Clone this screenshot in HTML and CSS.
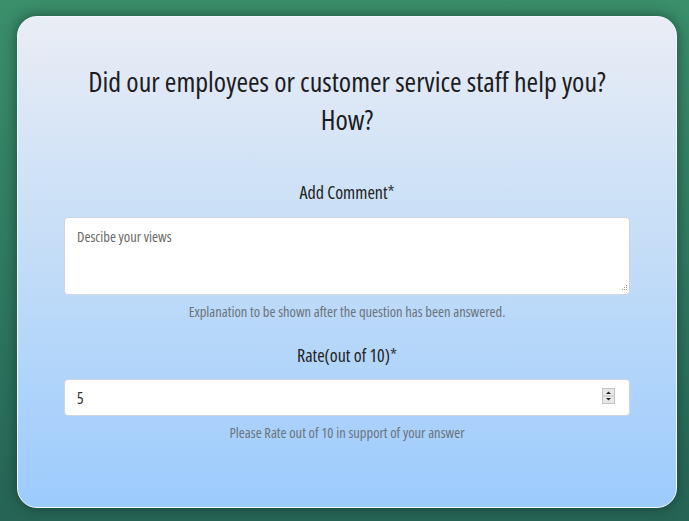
FILE: index.html
```html
<!DOCTYPE html>
<html>
<head>
<meta charset="utf-8">
<link rel="stylesheet" href="styles.css">
</head>
<body>
<main class="card">
  <h1 class="question">Did our employees or customer service staff help you?<br>How?</h1>
  <div class="field field-comment">
    <label class="label" for="comment">Add Comment<span class="req">*</span></label>
    <div class="control">
      <textarea id="comment" class="textarea" placeholder="Descibe your views"></textarea>
      <svg class="grip" width="8" height="8" viewBox="0 0 8 8" aria-hidden="true">
        <rect x="6" y="0" width="1" height="1"/>
        <rect x="4" y="2" width="1" height="1"/><rect x="6" y="2" width="1" height="1"/>
        <rect x="2" y="4" width="1" height="1"/><rect x="4" y="4" width="1" height="1"/><rect x="6" y="4" width="1" height="1"/>
      </svg>
    </div>
    <p class="help">Explanation to be shown after the question has been answered.</p>
  </div>
  <div class="field field-rate">
    <label class="label" for="rate">Rate(out of 10)<span class="req">*</span></label>
    <div class="control">
      <input id="rate" class="input" type="number" value="5" min="0" max="10">
      <span class="spin" aria-hidden="true">
        <svg width="13" height="16" viewBox="0 0 13 16">
          <rect x="0.5" y="0.5" width="12" height="15" fill="#e8e8e8" stroke="#c4c4c4"/>
          <line x1="1" y1="8" x2="12" y2="8" stroke="#c4c4c4"/>
          <path d="M4 6 L9 6 L6.5 3.5 Z" fill="#222"/>
          <path d="M4 10 L9 10 L6.5 12.5 Z" fill="#222"/>
        </svg>
      </span>
    </div>
    <p class="help">Please Rate out of 10 in support of your answer</p>
  </div>
</main>
</body>
</html>
```
FILE: styles.css
```css
html, body {
  margin: 0;
  padding: 0;
}
body {
  min-height: 521px;
  background: linear-gradient(180deg, #3b8f6b 0%, #2f7a61 50%, #266456 100%);
  font-family: "Open Sans", "DejaVu Sans", sans-serif;
  font-stretch: 75%;
  padding: 16px 12px 13px 17px;
  box-sizing: border-box;
}
.card {
  width: 660px;
  height: 492px;
  box-sizing: border-box;
  border-radius: 20px;
  background: linear-gradient(180deg, #eaedf5 0%, #c6def7 45%, #9ccbfd 100%);
  border: 1px solid #f4f8ff;
  box-shadow: 0 0 14px rgba(20, 50, 40, 0.7);
  padding: 45px 46px 0 46px;
  text-align: center;
}
.question {
  margin: 0;
  font-size: 28px;
  line-height: 38px;
  font-weight: 400;
  color: #1d1d1f;
}
.field {
  display: flex;
  flex-direction: column;
}
.field-comment {
  margin-top: 42px;
}
.field-rate {
  margin-top: 21px;
}
.label {
  font-size: 18px;
  line-height: 24px;
  color: #222;
  margin-bottom: 13px;
}
.field-rate .label {
  margin-bottom: 12px;
}
.req {
  color: #3a3d44;
}
.control {
  position: relative;
  display: flex;
}
.textarea, .input {
  width: 100%;
  box-sizing: border-box;
  border: 1px solid #cfd6de;
  border-radius: 4px;
  background: #fff;
  font-family: inherit;
  font-stretch: 75%;
  color: #333;
  margin: 0;
  outline: none;
}
.textarea {
  height: 78px;
  resize: none;
  padding: 9px 12px;
  font-size: 14.5px;
  line-height: 20px;
}
.textarea::placeholder {
  color: #6a6a6a;
}
.input {
  height: 37px;
  padding: 6px 12px;
  font-size: 15.5px;
  -moz-appearance: textfield;
}
.input::-webkit-inner-spin-button,
.input::-webkit-outer-spin-button {
  -webkit-appearance: none;
  margin: 0;
}
.grip {
  position: absolute;
  right: 2px;
  bottom: 2px;
  fill: #9a9a9a;
}
.spin {
  position: absolute;
  right: 15px;
  top: 9px;
  display: flex;
}
.help {
  margin: 7px 0 0 0;
  font-size: 14.5px;
  line-height: 20px;
  color: #6c737b;
}
```
